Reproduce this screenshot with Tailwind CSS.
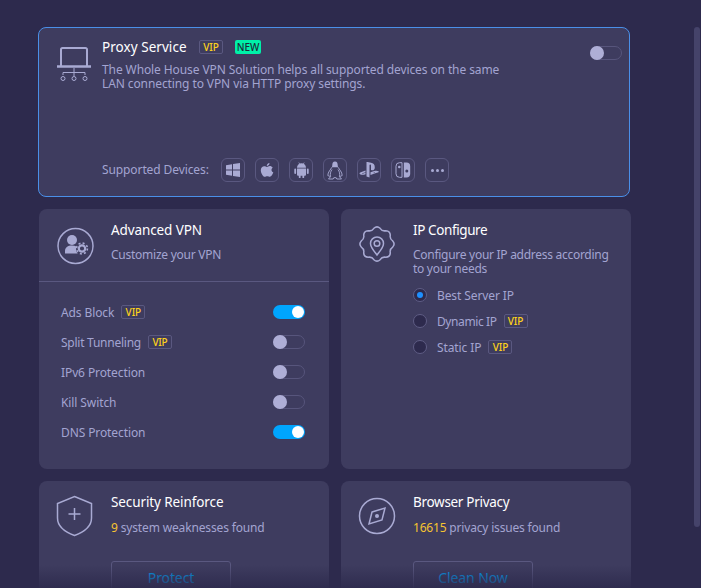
<!DOCTYPE html>
<html lang="en">
<head>
  <meta charset="UTF-8">
  <title>VPN Settings</title>
  <script src="https://cdn.jsdelivr.net/npm/@tailwindcss/browser@4"></script>
</head>
<body class="relative h-[588px] w-[701px] overflow-hidden bg-[#2d2a4d] font-['Noto_Sans',sans-serif] text-[12px] leading-[15px] tracking-[-0.1px] text-[#a3a4d1]">
  <main class="w-[592px] ml-[38px] pt-[27px] flex flex-col gap-[12px]">

    <!-- proxy card -->
    <section class="h-[170px] rounded-[8px] border border-[#4a8fe8] bg-[#3e3c5f] relative pl-[63px] pt-[11px]">
      <div class="flex items-center h-[16px]">
        <h2 class="w-[85px] text-[13.5px] tracking-[0.05px] text-white whitespace-nowrap">Proxy Service</h2>
        <span class="ml-[12px] w-[24px] h-[14px] flex items-center justify-center rounded-[2px] border border-[#5a5880] text-[10px] font-medium text-[#ffd21a]">VIP</span>
        <span class="ml-[12px] w-[26px] h-[14px] flex items-center justify-center rounded-[2px] bg-[#00f0a8] text-[10px] font-medium text-[#1b2b3a]">NEW</span>
      </div>
      <p class="mt-[8px] w-[410px] leading-[14px]">The Whole House VPN Solution helps all supported devices on the same LAN connecting to VPN via HTTP proxy settings.</p>
      <svg class="absolute left-[17px] top-[18px]" width="36" height="36" viewBox="0 0 36 36" fill="none" stroke="#a9aad3">
        <path stroke-width="2" d="M5 20V3.500A1.500 1.500 0 0 1 6.500 2h23A1.500 1.500 0 0 1 31 3.500V20"/>
        <path stroke-width="2.500" d="M1 20.500h34"/>
        <path d="M18 22v8M7 29v-2.500h22V29"/>
        <circle cx="7" cy="32.500" r="2"/><circle cx="18" cy="32.500" r="2"/><circle cx="29" cy="32.500" r="2"/>
      </svg>
      <div class="absolute right-[7px] top-[18px] w-[32px] h-[14px] rounded-full border border-[#57557c]">
        <span class="absolute -left-px -top-px w-[14px] h-[14px] rounded-full bg-[#aeaed6]"></span>
      </div>

      <div class="absolute left-[63px] top-[130px] flex items-center">
        <span class="w-[119px] pb-[2px]">Supported Devices:</span>
        <div class="flex gap-[10px] text-[#a9aad3]">
          <span class="w-[24px] h-[24px] rounded-[6px] border border-[#5a5880] flex items-center justify-center">
            <svg width="14" height="14" viewBox="0 0 14 14" fill="currentColor"><path d="M0 2.200 6 1.300V6.500H0zM7 1.100 14 0V6.500H7zM0 7.500H6V12.700L0 11.800zM7 7.500H14V14L7 12.900z"/></svg>
          </span>
          <span class="w-[24px] h-[24px] rounded-[6px] border border-[#5a5880] flex items-center justify-center">
            <svg width="14" height="14" viewBox="0 0 14 14" fill="currentColor"><path d="M9.500 0c.1 1.600-1.200 3-2.700 3C6.600 1.500 8 .2 9.500 0zM12.700 4.700c-1.800 1.100-1.500 3.800.6 4.600-.6 1.700-1.900 4.500-3.500 4.500-1 0-1.300-.6-2.500-.6s-1.600.6-2.500.6C3 13.800.8 10 .8 7.200c0-2.800 1.800-4 3.400-4 1.100 0 2 .7 2.700.7s1.700-.8 2.900-.8c1.100 0 2.200.5 2.900 1.600z"/></svg>
          </span>
          <span class="w-[24px] h-[24px] rounded-[6px] border border-[#5a5880] flex items-center justify-center">
            <svg width="15" height="16" viewBox="0 0 15 16" fill="currentColor"><path d="M3 5.800a4.500 4.500 0 0 1 9 0zM3 6.500h9v6.300a1 1 0 0 1-1 1h-.8v1.500a.9.9 0 0 1-1.800 0v-1.500H6.600v1.500a.9.900 0 0 1-1.800 0v-1.500H4a1 1 0 0 1-1-1zM1.200 6.500a.9.900 0 0 1 .9.900v3.700a.9.900 0 0 1-1.800 0V7.400a.9.900 0 0 1 .9-.900zM13.800 6.500a.9.900 0 0 1 .9.900v3.700a.9.900 0 0 1-1.800 0V7.400a.9.900 0 0 1 .9-.900z"/><path d="M4.800 .5 6 2.500M10.200 .5 9 2.500" stroke="currentColor" stroke-width=".7"/></svg>
          </span>
          <span class="w-[24px] h-[24px] rounded-[6px] border border-[#5a5880] flex items-center justify-center">
            <svg width="18" height="19" viewBox="0 0 18 19" fill="none" stroke="currentColor" stroke-width=".9"><path fill="currentColor" stroke="none" d="M9 .5c2 0 2.700 1.700 2.700 3.500 0 1 .2 1.700.5 2.300H5.800c.3-.6.500-1.300.5-2.300C6.300 2.200 7 .5 9 .5z"/><path d="M5.800 6.300C4.800 8.500 1.800 11 1.800 14.500l2.700 1.200M12.200 6.300c1 2.200 4 4.700 4 8.200l-2.700 1.200"/><path d="M6 8.500c-1.500 2-2 4.500-1.500 7.200L2.500 18h4.700l.6-1.300h2.400l.6 1.300h4.700l-2-2.300c.5-2.700 0-5.200-1.500-7.200"/></svg>
          </span>
          <span class="w-[24px] h-[24px] rounded-[6px] border border-[#5a5880] flex items-center justify-center">
            <svg width="20" height="16" viewBox="0 0 20 16" fill="currentColor"><path d="M7.500 0v14.500l3 1V3.500c0-.6.300-1 .8-.9.500.1.700.5.700 1.100v4.300c2 .9 3.800 0 3.800-2.800C15.800 2.200 14.200 1.300 12 .8 10.700.5 9 0 7.500 0z"/><path d="M6.500 8.500 1.800 10.200C.2 10.800 0 12 1.500 12.500c1.600.5 3.200.4 5-.2v-1.600l-3 1c-.6.200-.8-.2-.2-.4l3.200-1.100zM11.500 11.300v1.800l5.500-2c1.500-.6 3.500-1 2.500-1.800-.9-.7-2.800-.7-4.300-.3l-3.700 1.200v1.700l3.800-1.300c.6-.2.900.2.300.4z"/></svg>
          </span>
          <span class="w-[24px] h-[24px] rounded-[6px] border border-[#5a5880] flex items-center justify-center">
            <svg width="16" height="16" viewBox="0 0 16 16" fill="none" stroke="currentColor"><path d="M7 .7H4.500A3.500 3.500 0 0 0 1 4.200v7.600a3.500 3.500 0 0 0 3.500 3.500H7z"/><circle cx="4.300" cy="5" r="1.300" fill="currentColor" stroke="none"/><path fill="currentColor" stroke="none" d="M8.800 .5h2.700A3.700 3.700 0 0 1 15.200 4.200v7.600a3.700 3.700 0 0 1-3.700 3.700H8.800z"/><circle cx="11.800" cy="9" r="1.500" fill="#3e3c5f" stroke="none"/></svg>
          </span>
          <span class="w-[24px] h-[24px] rounded-[6px] border border-[#5a5880] flex items-center justify-center gap-[2px]">
            <i class="w-[3px] h-[3px] rounded-full bg-[#a9aad3]"></i><i class="w-[3px] h-[3px] rounded-full bg-[#a9aad3]"></i><i class="w-[3px] h-[3px] rounded-full bg-[#a9aad3]"></i>
          </span>
        </div>
      </div>
    </section>

    <div class="grid grid-cols-[290px_290px] gap-x-[12px] gap-y-[12px] pl-px">
      <!-- advanced vpn -->
      <section class="h-[260px] rounded-[8px] bg-[#3e3c5f]">
        <div class="relative h-[73px] border-b border-[#5a5880] pl-[72px] pt-[12px]">
          <h2 class="text-[13.5px] leading-[18px] text-white">Advanced VPN</h2>
          <p class="mt-[8px] tracking-[-0.25px]">Customize your VPN</p>
          <svg class="absolute left-[17px] top-[18px]" width="38" height="38" viewBox="0 0 38 38" fill="none">
            <circle cx="19.500" cy="19" r="17.500" stroke="#a9aad3" stroke-width="1.500"/>
            <circle cx="16" cy="13" r="5" fill="#a9aad3"/>
            <path fill="#a9aad3" d="M9 26.500V24c0-3.500 2.800-5.500 7-5.500 1.700 0 3.200.3 4.500.9-.9 2.300-.5 5 1.200 7.100z"/>
            <circle cx="26" cy="21.500" r="3.200" stroke="#a9aad3" stroke-width="2.200"/>
            <circle cx="26" cy="21.500" r="5.400" stroke="#a9aad3" stroke-width="1.600" stroke-dasharray="2 2.240"/>
          </svg>
        </div>
        <ul class="pl-[22px] pr-[24px] pt-[15px] flex flex-col">
          <li class="h-[30px] flex items-center justify-between">
            <span class="flex items-center">Ads Block<b class="ml-[7px] w-[24px] h-[14px] flex items-center justify-center rounded-[2px] border border-[#5a5880] text-[10px] font-medium text-[#ffd21a]">VIP</b></span>
            <span class="relative w-[32px] h-[14px] rounded-full bg-[#00a5fe]"><i class="absolute right-[1px] top-[1px] w-[12px] h-[12px] rounded-full bg-white"></i></span>
          </li>
          <li class="h-[30px] flex items-center justify-between">
            <span class="flex items-center tracking-[-0.25px]">Split Tunneling<b class="ml-[7px] w-[24px] h-[14px] flex items-center justify-center rounded-[2px] border border-[#5a5880] text-[10px] font-medium text-[#ffd21a]">VIP</b></span>
            <span class="relative w-[32px] h-[14px] rounded-full border border-[#57557c]"><i class="absolute -left-px -top-px w-[14px] h-[14px] rounded-full bg-[#aeaed6]"></i></span>
          </li>
          <li class="h-[30px] flex items-center justify-between">
            <span>IPv6 Protection</span>
            <span class="relative w-[32px] h-[14px] rounded-full border border-[#57557c]"><i class="absolute -left-px -top-px w-[14px] h-[14px] rounded-full bg-[#aeaed6]"></i></span>
          </li>
          <li class="h-[30px] flex items-center justify-between">
            <span>Kill Switch</span>
            <span class="relative w-[32px] h-[14px] rounded-full border border-[#57557c]"><i class="absolute -left-px -top-px w-[14px] h-[14px] rounded-full bg-[#aeaed6]"></i></span>
          </li>
          <li class="h-[30px] flex items-center justify-between">
            <span>DNS Protection</span>
            <span class="relative w-[32px] h-[14px] rounded-full bg-[#00a5fe]"><i class="absolute right-[1px] top-[1px] w-[12px] h-[12px] rounded-full bg-white"></i></span>
          </li>
        </ul>
      </section>

      <!-- ip configure -->
      <section class="relative h-[260px] rounded-[8px] bg-[#3e3c5f] pl-[72px] pt-[12px]">
        <h2 class="text-[13.5px] leading-[18px] tracking-[-0.4px] text-white">IP Configure</h2>
        <p class="mt-[9px] w-[202px] leading-[14px] tracking-[-0.28px]">Configure your IP address according to your needs</p>
        <svg class="absolute left-[18px] top-[17px]" width="36" height="36" viewBox="0 0 36 36" fill="none" stroke="#a9aad3" stroke-width="1.500">
          <path d="M14.880 2.310Q18 -.5 21.120 2.310Q23.170 5.530 26.890 4.700Q31.080 4.920 31.300 9.110Q30.470 12.830 33.690 14.880Q36.500 18 33.690 21.120Q30.470 23.170 31.300 26.890Q31.080 31.080 26.890 31.300Q23.170 30.470 21.120 33.690Q18 36.500 14.880 33.690Q12.830 30.470 9.110 31.300Q4.920 31.080 4.700 26.890Q5.530 23.170 2.310 21.120Q-.5 18 2.310 14.880Q5.530 12.830 4.700 9.110Q4.920 4.920 9.110 4.700Q12.830 5.530 14.880 2.310z"/>
          <path d="M18 29c-3-4-6.500-7.500-6.500-11.500a6.500 6.500 0 0 1 13 0C24.500 21.500 21 25 18 29z"/>
          <circle cx="18" cy="17.500" r="2.800"/>
        </svg>
        <div class="mt-[6px] flex flex-col">
          <label class="h-[26px] flex items-center">
            <span class="w-[14px] h-[14px] mr-[10px] rounded-full border border-[#5f5d85] bg-[#2d2a4d] flex items-center justify-center"><i class="w-[6px] h-[6px] rounded-full bg-[#1e90ff]"></i></span>Best Server IP
          </label>
          <label class="h-[26px] flex items-center tracking-[-0.4px]">
            <span class="w-[14px] h-[14px] mr-[10px] rounded-full border border-[#5f5d85] bg-[#2d2a4d]"></span>Dynamic IP<b class="ml-[7px] w-[24px] h-[14px] flex items-center justify-center rounded-[2px] border border-[#5a5880] text-[10px] font-medium tracking-normal text-[#ffd21a]">VIP</b>
          </label>
          <label class="h-[26px] flex items-center">
            <span class="w-[14px] h-[14px] mr-[10px] rounded-full border border-[#5f5d85] bg-[#2d2a4d]"></span>Static IP<b class="ml-[7px] w-[24px] h-[14px] flex items-center justify-center rounded-[2px] border border-[#5a5880] text-[10px] font-medium text-[#ffd21a]">VIP</b>
          </label>
        </div>
      </section>

      <!-- security -->
      <section class="relative h-[130px] rounded-[8px] bg-[#3e3c5f] pl-[72px] pt-[12px]">
        <h2 class="text-[13.5px] leading-[18px] text-white">Security Reinforce</h2>
        <p class="mt-[9px] tracking-[-0.15px]"><span class="text-[#f6c431]">9</span> system weaknesses found</p>
        <svg class="absolute left-[17px] top-[14px]" width="38" height="42" viewBox="0 0 38 42" fill="none" stroke="#a9aad3" stroke-width="1.500">
          <path d="M18.500 1.500 35.500 8.500V23c0 8.500-7.500 14-17 17.500C9 37 1.500 31.500 1.500 23V8.500z"/>
          <path d="M18.500 13v12M12.500 19h12"/>
        </svg>
        <button class="mt-[26px] w-[120px] h-[32px] rounded-[3px] border border-[#5a5880] text-[14px] text-[#00a5fe]">Protect</button>
      </section>

      <!-- browser privacy -->
      <section class="relative h-[130px] rounded-[8px] bg-[#3e3c5f] pl-[72px] pt-[12px]">
        <h2 class="text-[13.5px] leading-[18px] tracking-[-0.3px] text-white">Browser Privacy</h2>
        <p class="mt-[9px] tracking-[-0.18px]"><span class="text-[#f6c431]">16615</span> privacy issues found</p>
        <svg class="absolute left-[17px] top-[16px]" width="38" height="38" viewBox="0 0 38 38" fill="none" stroke="#a9aad3" stroke-width="1.500">
          <circle cx="19" cy="19" r="17.500"/>
          <path d="M14 15 27 11 24 23 11 27z"/>
          <circle cx="19" cy="19" r="2" fill="#a9aad3" stroke="none"/>
        </svg>
        <button class="mt-[26px] w-[120px] h-[32px] rounded-[3px] border border-[#5a5880] text-[14px] text-[#00a5fe]">Clean Now</button>
      </section>
    </div>
  </main>

  <!-- fade over the scrolled content -->
  <div class="absolute left-0 right-0 bottom-0 h-[23px] bg-gradient-to-b from-[#2d2a4d]/0 to-[#2d2a4d]/90"></div>
  <!-- scrollbar -->
  <div class="absolute left-[694px] top-[27px] w-[6px] h-[500px] rounded-full bg-[#45436a]"></div>
</body>
</html>
